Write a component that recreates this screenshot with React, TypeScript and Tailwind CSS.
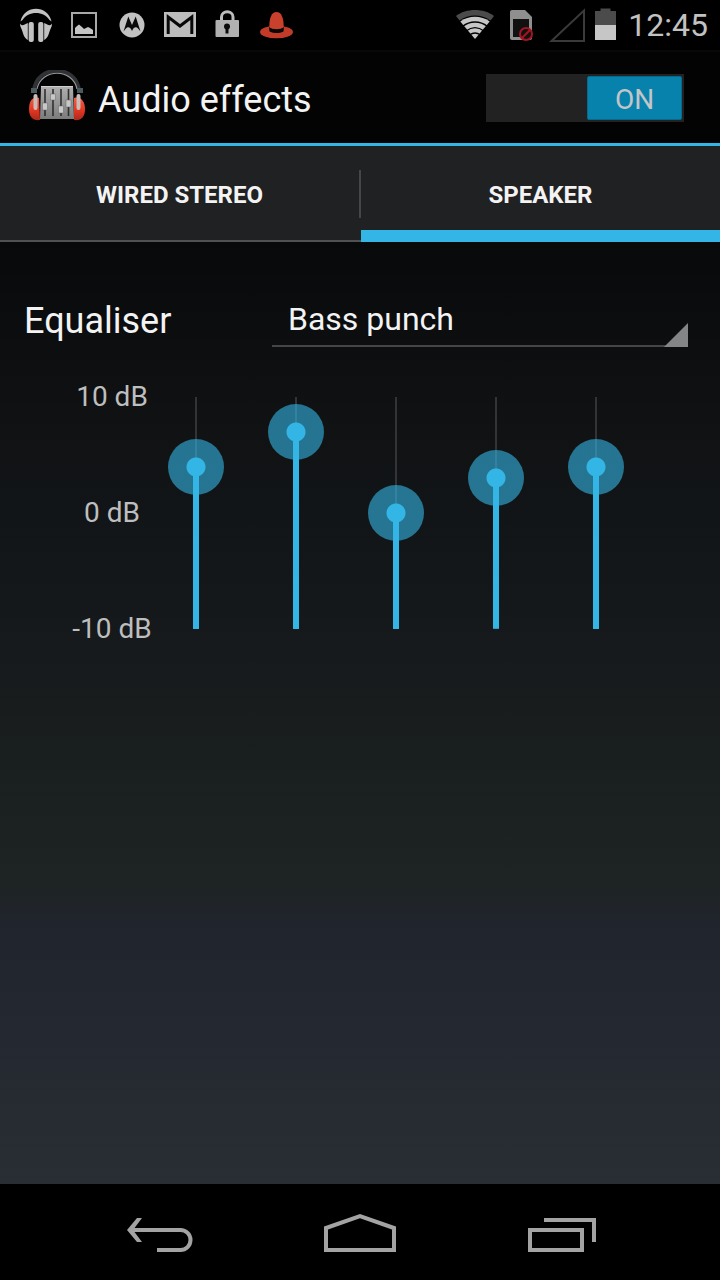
import { useState } from "react";

const PRESETS = ["Normal", "Bass punch", "Classical", "Dance", "Flat", "Folk", "Heavy metal", "Hip hop", "Jazz", "Pop", "Rock"];

const BANDS = [
  { name: "60 Hz", gain: 4 },
  { name: "230 Hz", gain: 7 },
  { name: "910 Hz", gain: 0 },
  { name: "3.6 kHz", gain: 3 },
  { name: "14 kHz", gain: 4 },
];

const MIN = -10;
const MAX = 10;
// thumb is 56px, so the usable track is inset by half of it on both ends
const TRACK = 232;
const INSET = 28;

function StatusBar() {
  return (
    <div className="flex h-[52px] items-center justify-between border-b-2 border-[#080808] bg-black pr-3 pl-3">
      <div className="flex items-center">
        {/* Headphones */}
        <svg className="h-[50px] w-12" viewBox="0 0 48 50" fill="#c2c2c2">
          <path d="M8.500 21.500C12 4.500 36 4.500 39.500 21.500L37.500 20C32 10.500 16 10.500 10.500 20Z" />
          <path d="M8 23.500C9.500 26.500 12 25 15.800 23V40C11.500 38 11 32 9.500 29C8.500 27 8 25.500 8 23.500Z" />
          <path d="M40 23.500C38.500 26.500 36 25 32.200 23V40C36.500 38 37 32 38.500 29C39.500 27 40 25.500 40 23.500Z" />
          <rect x="16.600" y="22" width="5.200" height="20" rx="2" />
          <rect x="26.200" y="22" width="5.200" height="20" rx="2" />
        </svg>
        {/* Screenshot */}
        <svg className="h-[50px] w-12" viewBox="0 0 48 50">
          <rect x="12" y="13" width="24" height="24" fill="none" stroke="#a8a8a8" strokeWidth="2" />
          <path d="M15 34V28L17 26L19 24.500L22 27L24 29L28 27L30 28L33 30V34Z" fill="#c4c4c4" />
        </svg>
        {/* Motorola */}
        <svg className="h-[50px] w-12" viewBox="0 0 48 50">
          <circle cx="24" cy="25" r="12.500" fill="#c2c2c2" />
          <path d="M15.500 31.500L20.300 16.500L24 25L27.700 16.500L32.500 31.500L30.500 29C28.500 26.500 26 26.500 24 31C22 26.500 19.500 26.500 17.500 29Z" fill="#0a0a0a" />
        </svg>
        {/* Gmail */}
        <svg className="h-[50px] w-12" viewBox="0 0 48 50">
          <rect x="8" y="12" width="32" height="25" fill="#bdbdbd" />
          <path d="M12.200 34V17L24 26L35.800 17V34" fill="none" stroke="#080808" strokeWidth="3" />
        </svg>
        {/* Lock */}
        <svg className="h-[50px] w-12" viewBox="0 0 48 50">
          <path d="M17.500 21V17C17.500 10 29 10 29 17V21" fill="none" stroke="#bdbdbd" strokeWidth="3" />
          <rect x="11.500" y="20" width="23.500" height="17" rx="1" fill="#b0b0b0" />
          <circle cx="23" cy="26.500" r="3" fill="#0a0a0a" />
          <path d="M21.500 28H24.500V33.500H21.500Z" fill="#0a0a0a" />
        </svg>
        {/* Hat */}
        <svg className="h-[50px] w-12" viewBox="0 0 48 50">
          <ellipse cx="24.500" cy="32" rx="16.500" ry="6.300" fill="#c23a28" />
          <path d="M17 27C22 30 27 30 32 27L31.500 31.500C27 33.500 22 33.500 17.500 31.500Z" fill="#080808" />
          <path d="M17.300 27C17.300 18 19.500 12 24.500 12C29.500 12 31.700 18 31.700 27C29 29.500 20 29.500 17.300 27Z" fill="#c9402c" />
        </svg>
      </div>

      <div className="flex items-center">
        {/* Wifi */}
        <svg className="h-[50px] w-[46px]" viewBox="0 0 46 50" fill="none">
          <path d="M4 16C14 8 32 8 42 16L38.500 20.500C29 13.800 17 13.800 7.500 20.500Z" fill="#4b4b4b" />
          <path d="M8.300 21.400C17 15.300 29 15.300 37.700 21.400L23 39Z" fill="#c6c6c6" />
          <path d="M10.500 26.500C18 20.500 28 20.500 35.500 26.500M14 31C20 26.500 26 26.500 32 31M17.500 35C21 32.500 25 32.500 28.500 35" stroke="#000" strokeWidth="1.300" />
        </svg>
        {/* No SIM */}
        <svg className="h-[50px] w-[46px]" viewBox="0 0 46 50">
          <path d="M12 12Q12 10 14 10H27L34 17V38Q34 40 32 40H14Q12 40 12 38Z" fill="#8f8f8f" />
          <rect x="15" y="19" width="16" height="18" fill="#111" />
          <circle cx="28" cy="34" r="6" fill="#111" stroke="#a51520" strokeWidth="2" />
          <path d="M24 38L32 30" stroke="#a51520" strokeWidth="2" />
        </svg>
        {/* No signal */}
        <svg className="h-[50px] w-[46px]" viewBox="0 0 46 50">
          <path d="M7.500 41L40 10.500V41Z" fill="none" stroke="#3a3a3a" strokeWidth="2" />
        </svg>
        {/* Battery */}
        <svg className="h-[50px] w-8" viewBox="0 0 32 50">
          <path d="M5 11H10.500V8.500H20.500V11H26V26H5Z" fill="#4b4b4b" />
          <rect x="5" y="25" width="21" height="15" fill="#c6c6c6" />
        </svg>
        <span className="ml-1.5 text-[32px] leading-[50px] text-[#c2c2c2]">12:45</span>
      </div>
    </div>
  );
}

function AppIcon() {
  return (
    <svg className="h-[56px] w-[58px]" viewBox="0 2 58 56" fill="none">
      <defs>
        <linearGradient id="plate" x1="0" y1="0" x2="0" y2="1">
          <stop offset="0" stopColor="#b0b0b0" />
          <stop offset="1" stopColor="#7c7c7c" />
        </linearGradient>
        <linearGradient id="cup" x1="0" y1="0" x2="0" y2="1">
          <stop offset="0" stopColor="#f0604a" />
          <stop offset="0.6" stopColor="#e2341f" />
          <stop offset="1" stopColor="#a82a1e" />
        </linearGradient>
      </defs>
      <path d="M6 23C8 -4 49 -4 51 23" stroke="#303235" strokeWidth="4" />
      <path d="M9 21C13 0 45 0 49 21" stroke="#96989a" strokeWidth="1.200" />
      <path d="M3 20H9V25H3ZM49 20H55V25H49Z" fill="#4a5a5f" />
      <path d="M11 30C4 28 1 34 1 41C1 49 5 53 12 52Z" fill="url(#cup)" />
      <path d="M46 30C53 28 57 34 57 41C57 49 53 53 46 52Z" fill="url(#cup)" />
      <path d="M7.500 28V40M50.500 28V40" stroke="#c9bdb9" strokeWidth="4" strokeLinecap="round" />
      <path d="M13 18H45L46 51H12Z" fill="url(#plate)" />
      <path d="M13 18.500H45" stroke="#cfcfcf" />
      <path d="M17 21V48M25 21V48M33 21V48M40.500 21V48" stroke="#303030" strokeWidth="1.600" />
      <g fill="#c8c8c8" stroke="#666" strokeWidth="0.500">
        <rect x="14.500" y="35" width="5" height="7" />
        <rect x="22.500" y="26" width="5" height="6" />
        <rect x="30.500" y="38" width="5" height="7" />
        <rect x="38" y="32" width="5" height="7" />
      </g>
    </svg>
  );
}

function BandSlider({ name, gain }: { name: string; gain: number }) {
  const [value, setValue] = useState(gain);
  const fill = ((value - MIN) / (MAX - MIN)) * TRACK;

  return (
    <input
      type="range"
      aria-label={name}
      min={MIN}
      max={MAX}
      value={value}
      onChange={(e) => setValue(Number(e.target.value))}
      className="m-0 h-[288px] w-14 cursor-pointer appearance-none bg-transparent bg-no-repeat [direction:rtl] [writing-mode:vertical-lr] [&::-webkit-slider-thumb]:size-14 [&::-webkit-slider-thumb]:appearance-none [&::-webkit-slider-thumb]:rounded-full [&::-webkit-slider-thumb]:bg-[radial-gradient(circle,#33b5e5_9px,#33b5e599_10px)]"
      style={{
        backgroundImage: "linear-gradient(#33b5e5, #33b5e5), linear-gradient(#333436, #333436)",
        backgroundSize: `6px ${fill}px, 2px ${TRACK}px`,
        backgroundPosition: `center bottom ${INSET}px, center ${INSET}px`,
      }}
    />
  );
}

export default function App() {
  const [on, setOn] = useState(true);
  const [tab, setTab] = useState("speaker");

  const tabClass = (name: string) =>
    tab === name
      ? "pt-0.5 text-2xl font-bold text-[#f3f3f3] shadow-[inset_0_-12px_0_#33b5e5]"
      : "pt-0.5 text-2xl font-bold text-[#f3f3f3] shadow-[inset_0_-2px_0_#505152]";

  return (
    <div className="flex min-h-screen flex-col bg-black font-[Roboto,sans-serif]">
      <StatusBar />

      {/* Action bar */}
      <header className="flex h-[94px] items-center justify-between border-b-3 border-[#33b5e5] bg-[#030303] pr-9 pl-7">
        <div className="flex items-center gap-3">
          <AppIcon />
          <h1 className="pt-1 text-4xl text-[#f3f3f3]">Audio effects</h1>
        </div>
        <button
          type="button"
          role="switch"
          aria-checked={on}
          aria-label="Audio effects"
          onClick={() => setOn(!on)}
          className={on ? "flex h-12 w-[198px] justify-end bg-[#222] p-0.5" : "flex h-12 w-[198px] justify-start bg-[#222] p-0.5"}
        >
          <span
            className={
              on
                ? "h-11 w-[95px] rounded-xs border border-[#066a8c] bg-[#0782ac] text-center text-[28px] leading-[46px] text-[#c3c5c8]"
                : "h-11 w-[95px] rounded-xs border border-[#333] bg-[#444] text-center text-[28px] leading-[46px] text-[#c3c5c8]"
            }
          >
            {on ? "ON" : "OFF"}
          </span>
        </button>
      </header>

      {/* Tabs */}
      <div role="tablist" className="grid h-24 grid-cols-[1fr_2px_1fr] bg-[#202123]">
        <button type="button" role="tab" aria-selected={tab === "wired"} onClick={() => setTab("wired")} className={tabClass("wired")}>
          WIRED STEREO
        </button>
        <div className="flex items-center shadow-[inset_0_-2px_0_#505152]">
          <div className="h-12 w-0.5 bg-[#454648]" />
        </div>
        <button type="button" role="tab" aria-selected={tab === "speaker"} onClick={() => setTab("speaker")} className={tabClass("speaker")}>
          SPEAKER
        </button>
      </div>

      <main className="flex-1 bg-[linear-gradient(#07090a,#101214_20%,#14181a_38%,#1e2323_68%,#20242c_72%,#292d34)] pt-[49px]">
        {/* Preset */}
        <div className="flex items-center pr-8 pl-6">
          <label htmlFor="preset" className="w-62 pt-1 text-4xl text-[#f3f3f3]">
            Equaliser
          </label>
          <div className="relative flex-1">
            <select
              id="preset"
              defaultValue="Bass punch"
              className="block h-14 w-full appearance-none border-b-2 border-[#444547] bg-transparent px-4 pt-0.5 text-[32px] text-[#f3f3f3] outline-none"
            >
              {PRESETS.map((p) => (
                <option key={p} className="bg-[#222]">
                  {p}
                </option>
              ))}
            </select>
            <svg className="pointer-events-none absolute right-0 bottom-0 size-6" viewBox="0 0 24 24">
              <path d="M24 0V24H0Z" fill="#848586" />
            </svg>
          </div>
        </div>

        {/* Bands */}
        <div className="mt-[22px] flex items-center pr-24 pl-14">
          <div className="flex h-[264px] w-28 flex-col justify-between text-center text-[28px] leading-8 text-[#bebebe]">
            <span>10 dB</span>
            <span>0 dB</span>
            <span>-10 dB</span>
          </div>
          <div className="flex flex-1 justify-between">
            {BANDS.map((b) => (
              <BandSlider key={b.name} name={b.name} gain={b.gain} />
            ))}
          </div>
        </div>
      </main>

      {/* Navigation bar */}
      <nav className="flex h-24 bg-black px-15">
        <button type="button" aria-label="Back" className="flex flex-1 items-center justify-center">
          <svg className="h-10 w-18" viewBox="0 0 72 40" fill="none">
            <path d="M8 18H56.500a10 10 0 0 1 0 20H33" stroke="#a3a3a3" strokeWidth="4" />
            <path d="M13 6H18L9 18L18 30H13L3 18Z" fill="#a3a3a3" />
          </svg>
        </button>
        <button type="button" aria-label="Home" className="flex flex-1 items-center justify-center">
          <svg className="h-10 w-18" viewBox="0 0 72 40" fill="none">
            <path d="M2 38V16L36 4L70 16V38Z" stroke="#a3a3a3" strokeWidth="4" />
          </svg>
        </button>
        <button type="button" aria-label="Recent apps" className="flex flex-1 items-center justify-center">
          <svg className="h-10 w-18" viewBox="0 0 72 40" fill="none" stroke="#a3a3a3" strokeWidth="4">
            <rect x="6" y="18" width="52" height="20" />
            <path d="M20 8H70V30" />
          </svg>
        </button>
      </nav>
    </div>
  );
}
